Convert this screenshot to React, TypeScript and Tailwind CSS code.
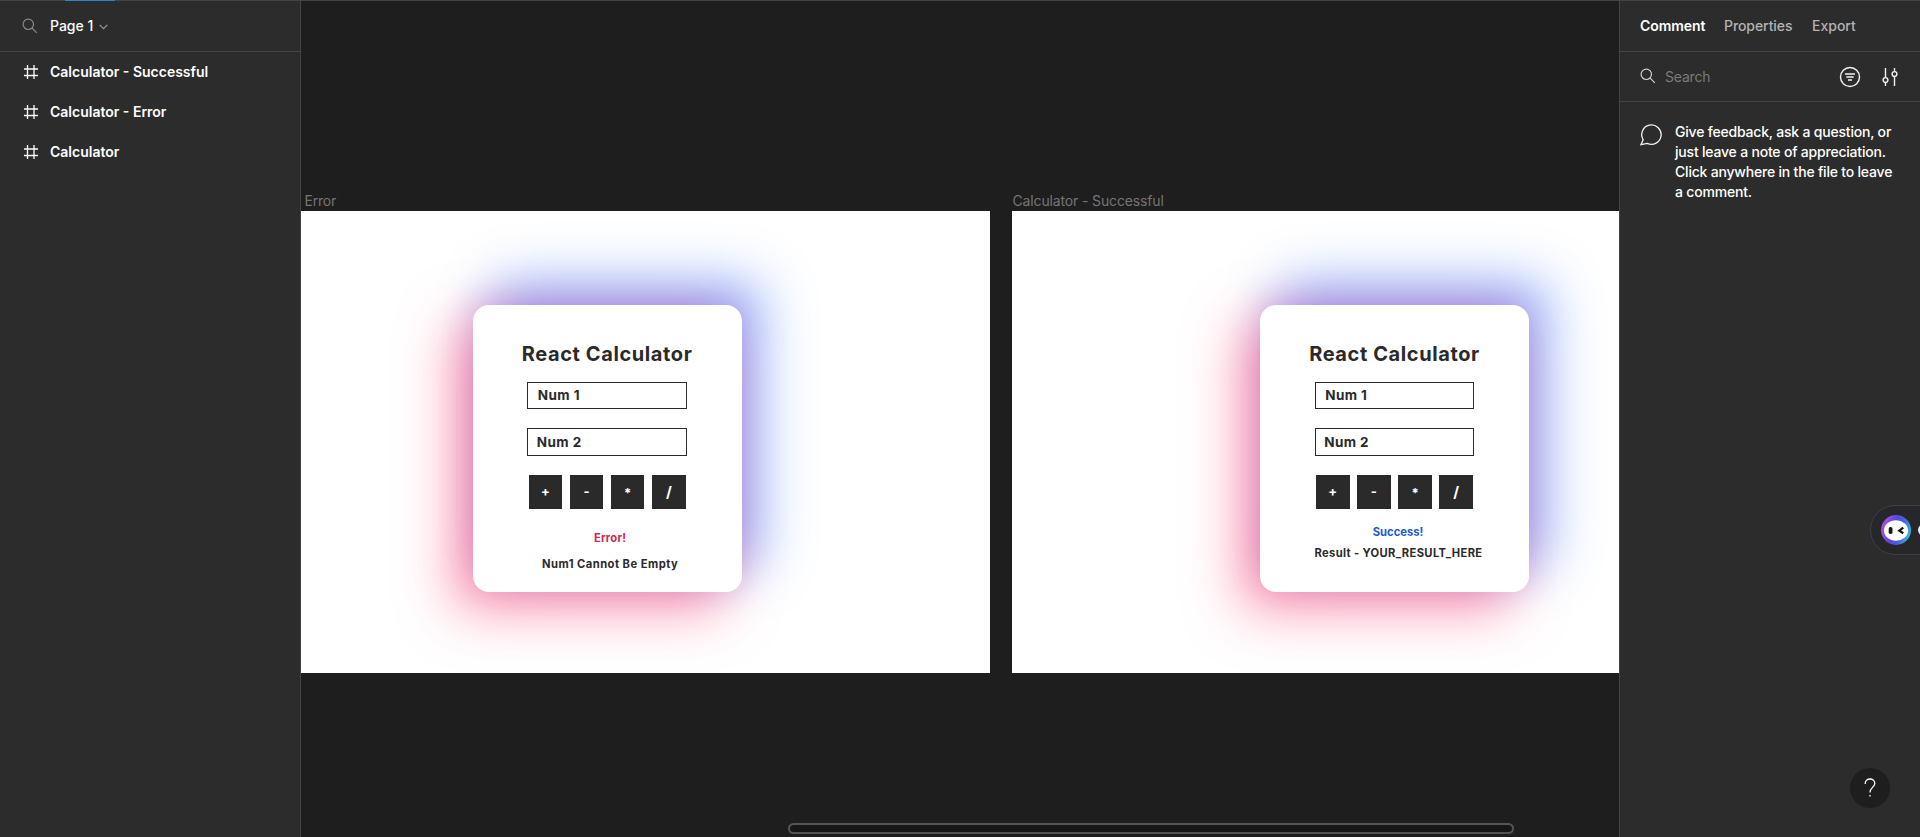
import React from "react";

type CalculatorProps = {
  status: string;
  statusClass: string;
  message: string;
  messageClass: string;
};

const operators = [
  { symbol: "+", style: "text-[13px]" },
  { symbol: "-", style: "text-[13px]" },
  { symbol: "*", style: "pt-[4px] text-[13px]" },
  { symbol: "/", style: "text-[15px]" },
];

function HashIcon() {
  return (
    <svg width="16" height="16" viewBox="0 0 16 16" fill="none" stroke="#ffffff" strokeWidth="1.3">
      <path d="M4.500 1v14M11 1v14M1 5h14M1 11.500h14" />
    </svg>
  );
}

function SearchIcon({ color }: { color: string }) {
  return (
    <svg width="16" height="16" viewBox="0 0 16 16" fill="none" stroke={color} strokeWidth="1.2">
      <circle cx="6.3" cy="6.3" r="5.2" />
      <path d="M10.2 10.2l4.600 4.600" />
    </svg>
  );
}

function Calculator({ status, statusClass, message, messageClass }: CalculatorProps) {
  return (
    <div className="flex h-[287px] w-[269px] flex-col items-center rounded-[16px] bg-white pt-[35px] text-[#2a2a2a] shadow-[0px_-8px_32px_rgba(150,60,190,0.2),-19px_17px_54px_rgba(255,45,95,0.5),20px_-24px_54px_rgba(50,110,250,0.48)]">
      <h1 className="h-[28px] text-[20px] leading-[28px] font-bold tracking-[0.6px] whitespace-nowrap">React Calculator</h1>
      <div className="mt-[14px] flex h-[27px] w-[159.500px] items-center border border-[#2a2a2a] pl-[9.500px] text-[13.5px] font-bold tracking-[0.4px]">
        Num 1
      </div>
      <div className="mt-[19.5px] flex h-[27.5px] w-[159.500px] items-center border border-[#2a2a2a] pl-[8.500px] text-[13.5px] font-bold tracking-[0.4px]">
        Num 2
      </div>
      <div className="mt-[19px] flex gap-[7.6px]">
        {operators.map(({ symbol, style }) => (
          <div key={symbol} className={`flex h-[33.6px] w-[33.6px] items-center justify-center bg-[#2a2a2a] font-bold text-white ${style}`}>
            {symbol}
          </div>
        ))}
      </div>
      <div className={statusClass}>{status}</div>
      <div className={messageClass}>{message}</div>
    </div>
  );
}

function LeftPanel() {
  const layers = ["Calculator - Successful", "Calculator - Error", "Calculator"];
  return (
    <aside className="flex w-[301px] shrink-0 flex-col border-r border-[#444] bg-[#2c2c2c]">
      <div className="flex h-[51px] shrink-0 items-center border-b border-[#444] pb-px pl-[22px]">
        <SearchIcon color="#8a8a8a" />
        <span className="ml-3 text-[14px] font-medium text-white">Page 1</span>
        <svg className="mt-0.5 ml-[6px]" width="9" height="6" viewBox="0 0 9 6" fill="none" stroke="#9a9a9a" strokeWidth="1.1">
          <path d="M.7.8l3.8 3.8L8.300.8" />
        </svg>
      </div>
      {layers.map((name) => (
        <div key={name} className="flex h-10 items-center pb-px pl-[23px]">
          <HashIcon />
          <span className="ml-[11px] text-[14px] font-semibold whitespace-nowrap text-white">{name}</span>
        </div>
      ))}
    </aside>
  );
}

function RightPanel() {
  return (
    <aside className="flex w-[301px] shrink-0 flex-col border-l border-[#444] bg-[#2c2c2c]">
      <div className="flex h-[51px] shrink-0 items-center border-b border-[#444] pb-[2px] pl-5 text-[14px] font-medium text-[#b3b3b3]">
        <span className="w-[84px] font-semibold tracking-[-0.08px] text-white">Comment</span>
        <span className="w-[88px] tracking-[-0.08px]">Properties</span>
        <span>Export</span>
      </div>
      <div className="flex h-[50px] shrink-0 items-center border-b border-[#444] pl-5">
        <div className="pb-[2px]">
          <SearchIcon color="#d0d0d0" />
        </div>
        <span className="ml-[9px] w-[174px] text-[14px] tracking-[-0.2px] text-[#7a7a7a]">Search</span>
        <svg width="22" height="22" viewBox="0 0 22 22" fill="none" stroke="#f2f2f2" strokeWidth="1.4">
          <circle cx="11" cy="11" r="9.5" />
          <path d="M6 8h10M7.300 11h7.400M9 14h4" />
        </svg>
        <svg className="ml-[21px]" width="16" height="20" viewBox="0 0 16 20" fill="none" stroke="#f2f2f2" strokeWidth="1.4">
          <path d="M3.500 1v9.700M3.500 15.500v3.500M12.500 1v3.500M12.500 9.300V19" />
          <circle cx="3.500" cy="13" r="2.400" />
          <circle cx="12.500" cy="7" r="2.400" />
        </svg>
      </div>
      <div className="flex pt-5 pl-5">
        <svg className="mt-[2px] shrink-0" width="24" height="22" viewBox="0 0 24 22" fill="none" stroke="#f2f2f2" strokeWidth="1.300">
          <path d="M1 20.600L3.200 15.800A9.700 9.700 0 1 1 7.200 19.400z" />
        </svg>
        <p className="ml-[11px] text-[14px] leading-5 font-medium tracking-[-0.2px] whitespace-nowrap text-white">
          Give feedback, ask a question, or
          <br />
          just leave a note of appreciation.
          <br />
          Click anywhere in the file to leave
          <br />a comment.
        </p>
      </div>
    </aside>
  );
}

export default function App() {
  return (
    <div className="relative flex h-[837px] w-[1920px] flex-col overflow-hidden bg-[#1e1e1e] font-['Inter',sans-serif]">
      <div className="flex h-px shrink-0 bg-[#444] pl-[65px]">
        <div className="h-px w-[50px] bg-[#2d86c4]" />
      </div>
      <div className="flex min-h-0 flex-1">
        <LeftPanel />
        <main className="relative flex-1 overflow-hidden">
          <div className="absolute top-[190px] left-[3.500px] text-[14px] leading-5 tracking-[-0.2px] text-[#757575]">Error</div>
          <div className="absolute top-[190px] left-[711.500px] text-[14px] leading-5 tracking-[-0.14px] whitespace-nowrap text-[#757575]">Calculator - Successful</div>
          <section className="absolute top-[210.400px] left-0 h-[461.200px] w-[689px] overflow-hidden bg-white pt-[93.600px] pl-[171.600px]">
            <Calculator
              status="Error!"
              statusClass="mt-[20px] ml-[6px] text-[11.2px] leading-[18px] font-bold tracking-[0.25px] text-[#d02752]"
              message="Num1 Cannot Be Empty"
              messageClass="mt-[8px] ml-[6px] text-[11.2px] leading-[18px] font-bold tracking-[0.46px] whitespace-nowrap"
            />
          </section>
          <section className="absolute top-[210.400px] left-[710.600px] h-[461.200px] w-[700px] overflow-hidden bg-white pt-[93.600px] pl-[248.400px]">
            <Calculator
              status="Success!"
              statusClass="mt-[14px] ml-[7px] text-[11.2px] leading-[18px] font-bold tracking-[0px] text-[#1a5ad0]"
              message="Result - YOUR_RESULT_HERE"
              messageClass="mt-[3px] ml-[8px] text-[11.2px] leading-[18px] font-bold tracking-[0.35px] whitespace-nowrap"
            />
          </section>
          <div className="absolute top-[822px] left-[487px] h-[11px] w-[726px] rounded-full border-2 border-[#555] bg-[#171717]" />
        </main>
        <RightPanel />
      </div>
      <div className="absolute top-[505px] left-[1870px] flex h-[50px] w-[70px] items-center rounded-l-full border border-[#3d3f4e] bg-[#272729] pl-[10px]">
        <svg width="30" height="30" viewBox="0 0 30 30">
          <defs>
            <linearGradient id="ring" x1="0.05" y1="0.6" x2="0.9" y2="0.85">
              <stop offset="0" stopColor="#9a50dc" />
              <stop offset="0.35" stopColor="#5548dd" />
              <stop offset="0.65" stopColor="#4a60dc" />
              <stop offset="1" stopColor="#38b5d8" />
            </linearGradient>
          </defs>
          <circle cx="15" cy="15" r="15" fill="url(#ring)" />
          <ellipse cx="15" cy="15.500" rx="12" ry="10.300" fill="#fff" />
          <rect x="7.700" y="12" width="3.800" height="7" rx="1.700" fill="#171717" />
          <path d="M22.300 12.700l-4 3 4 2.600" fill="none" stroke="#171717" strokeWidth="2.300" />
        </svg>
        <div className="ml-[7px] h-[12px] w-[12px] rounded-full border-2 border-[#eee]" />
      </div>
      <div className="absolute top-[768px] left-[1850px] flex h-10 w-10 items-center justify-center rounded-full bg-[#1e1e1e]">
        <svg width="12" height="20" viewBox="0 0 12 20" fill="none" stroke="#fff" strokeWidth="1.300">
          <path d="M1.200 6V5.500a4.800 4.500 0 0 1 9.600 0C10.800 9 6 9.500 6 14.500M6 17v1.500" />
        </svg>
      </div>
    </div>
  );
}
